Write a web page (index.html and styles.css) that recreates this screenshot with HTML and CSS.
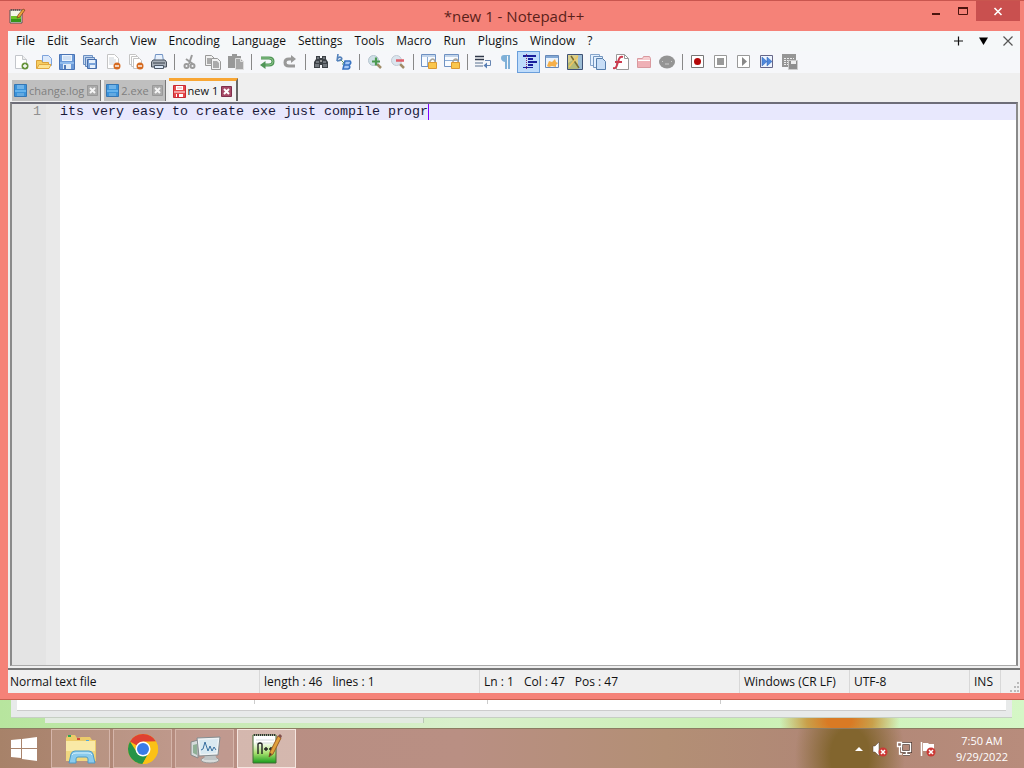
FILE: index.html
```
<!DOCTYPE html>
<html lang="en">
<head>
  <meta charset="UTF-8">
  <meta name="viewport" content="width=device-width, initial-scale=1.0">
  <title>*new 1 - Notepad++</title>
  <link rel="stylesheet" href="styles.css">
</head>
<body>

  <main class="window">
    <header class="titlebar">
      <svg class="app-icon" width="18" height="18" viewBox="0 0 18 18"><path d="M2 3h12v13H2z" fill="#f4f7e8" stroke="#555"/><path d="M3 9h10v6H3z" fill="#6cc427"/><path d="M3 12h10v3H3z" fill="#35961b"/><path d="M3 3h10" stroke="#333" stroke-dasharray="1 1"/><path d="M9 11l1-3 5-6 2 1-5 7z" fill="#e9a43a" stroke="#7a3b1d" stroke-width=".7"/></svg>
      <h1>*new 1 - Notepad++</h1>
      <div class="window-buttons">
        <button aria-label="Minimize"><svg width="12" height="12" viewBox="0 0 12 12"><path d="M2 8h8v2H2z" fill="#4b150f"/></svg></button>
        <button aria-label="Maximize"><svg width="12" height="12" viewBox="0 0 12 12"><path d="M1.5 3.5h9v6h-9z" fill="none" stroke="#4b150f"/><path d="M1 2h10v2H1z" fill="#4b150f"/></svg></button>
        <button class="close" aria-label="Close"><svg width="12" height="12" viewBox="0 0 12 12"><path d="M2.500 3l7 7M9.500 3l-7 7" stroke="#fff" stroke-width="1.600"/></svg></button>
      </div>
    </header>

    <div class="client">
      <nav class="menubar">
        <button>File</button>
        <button>Edit</button>
        <button>Search</button>
        <button>View</button>
        <button>Encoding</button>
        <button>Language</button>
        <button>Settings</button>
        <button>Tools</button>
        <button>Macro</button>
        <button>Run</button>
        <button>Plugins</button>
        <button>Window</button>
        <button>?</button>
        <div class="menu-extra">
          <button aria-label="New tab"><svg width="12" height="12" viewBox="0 0 12 12"><path d="M2 6h9M6.500 1.500v9" stroke="#111" stroke-width="1.200"/></svg></button>
          <button aria-label="Tab list"><svg width="12" height="12" viewBox="0 0 12 12"><path d="M2 2.500h9L6.500 10z" fill="#000"/></svg></button>
          <button aria-label="Close tab"><svg width="12" height="12" viewBox="0 0 12 12"><path d="M1.500 1.500l9 9M10.500 1.500l-9 9" stroke="#555" stroke-width="1.200"/></svg></button>
        </div>
      </nav>

      <div class="toolbar">
        <button aria-label="New"><svg viewBox="0 0 16 16"><path d="M2.500 1.500h7l4 4v9h-11z" fill="#fff" stroke="#c3c6cb"/><path d="M9.500 1.500v4h4" fill="#eee" stroke="#c3c6cb"/><circle cx="12" cy="12" r="3.500" fill="#66933a"/><path d="M10 12h4M12 10v4" stroke="#fff" stroke-width="1.300"/></svg></button>
        <button aria-label="Open"><svg viewBox="0 0 16 16"><path d="M6.500 1.500h6l3 3v7h-9z" fill="#dce9fb" stroke="#7ea3dc"/><path d="M.5 6.500h5l1 2h6v6H.5z" fill="#f7ce62" stroke="#d9a13c"/><path d="M1 14.500l2-4h12l-2 4z" fill="#fde391" stroke="#e1a941"/></svg></button>
        <button aria-label="Save"><svg viewBox="0 0 16 16"><path d="M.5.5h15v15H.5z" fill="#6c9ad8" stroke="#4a74b5"/><path d="M3 1h10v6H3z" fill="#eaf3fd"/><path d="M4 3h8M4 5h8" stroke="#b5cdea"/><path d="M1 8h14v2H1z" fill="#92bcec"/><path d="M4 10h8v5H4z" fill="#e4edf7"/><path d="M5 11h2v4H5z" fill="#4f78b6"/></svg></button>
        <button aria-label="Save all"><svg viewBox="0 0 16 16"><path d="M1.500 1.500h9v9h-9z" fill="#c1d5ef" stroke="#6c90c2"/><path d="M3.500 3.500h9v9h-9z" fill="#c1d5ef" stroke="#5f86bd"/><path d="M5.500 5.500h9v9h-9z" fill="#7ba4da" stroke="#466ca9"/><path d="M7 6h6v3H7zM8 11h5v3H8z" fill="#e6f0fb"/></svg></button>
        <button aria-label="Close file"><svg viewBox="0 0 16 16"><path d="M2.500.5h7l4 4v10h-11z" fill="#fff" stroke="#c4c4c4"/><path d="M4 4h5M4 6h7M4 8h7M4 10h5" stroke="#ccd2d8"/><circle cx="12" cy="12" r="3.500" fill="#d56b22"/><path d="M10 12h4" stroke="#fff" stroke-width="1.400"/></svg></button>
        <button aria-label="Close all"><svg viewBox="0 0 16 16"><path d="M1.500.5h6l2 2v8h-8z" fill="#fff" stroke="#c4c4c4"/><path d="M3.500 2.500h6l2 2v8h-8z" fill="#fff" stroke="#c4c4c4"/><path d="M5.500 4.500h6l2 2v8h-8z" fill="#fff" stroke="#c4c4c4"/><circle cx="12" cy="12" r="3.500" fill="#d56b22"/><path d="M10 12h4" stroke="#fff" stroke-width="1.400"/></svg></button>
        <button aria-label="Print"><svg viewBox="0 0 16 16"><path d="M4.500.5h7l1 7h-9z" fill="#e8f1fd" stroke="#7294c4"/><path d="M2 6l-1.500 2v5h15V8L14 6z" fill="#a7afb8" stroke="#4b535e"/><path d="M2 9h12" stroke="#38404b"/><path d="M3.500 11.500h9v3h-9z" fill="#dce9f8" stroke="#4d5866"/></svg></button>
        <span class="separator"></span>
        <button aria-label="Cut"><svg viewBox="0 0 16 16"><path d="M10 1L7 10M4 5l7 5" stroke="#9b9b9b" stroke-width="2" fill="none"/><circle cx="4.500" cy="12" r="2" fill="none" stroke="#9b9b9b" stroke-width="2"/><circle cx="10.500" cy="12" r="2" fill="none" stroke="#9b9b9b" stroke-width="2"/></svg></button>
        <button aria-label="Copy"><svg viewBox="0 0 16 16"><path d="M.5 1.500h6l3 3v7h-9z" fill="#f1f1f1" stroke="#999"/><path d="M2 4h4v6H2z" fill="#aaa"/><path d="M6.500 4.500h6l3 3v8h-9z" fill="#f1f1f1" stroke="#999"/><path d="M8 7h4l2 2v5H8z" fill="#aaa"/></svg></button>
        <button aria-label="Paste"><svg viewBox="0 0 16 16"><path d="M0 2h4V0h5v2h4v12H0z" fill="#989898"/><path d="M7.500 4.500h5l3 3v8h-8z" fill="#a6a6a6" stroke="#ddd"/><path d="M12.500 4.500v3h3" stroke="#ddd" fill="none"/></svg></button>
        <span class="separator"></span>
        <button aria-label="Undo"><svg viewBox="0 0 16 16"><path d="M2 4h8q4 0 4 3.500T10 11H6" fill="none" stroke="#4f9557" stroke-width="3"/><path d="M2 4h8q4 0 4 3.500T10 11H6" fill="none" stroke="#8cc48a"/><path d="M6.500 7v8L1 11z" fill="#4f9557"/></svg></button>
        <button aria-label="Redo"><svg viewBox="0 0 16 16"><path d="M10 5H7Q3 5 3 8.500T7 12h6" fill="none" stroke="#999" stroke-width="3"/><path d="M9 1v8l5-4z" fill="#999"/></svg></button>
        <span class="separator"></span>
        <button aria-label="Find"><svg viewBox="0 0 16 16"><path d="M3 2h4v2h2V2h4v3l2 3v6H9v-3H7v3H1V8l2-3z" fill="#3c4146"/><path d="M3 8h3M10 8h3M3 10v3M5 10v3M11 10v3M13 10v3M4 4h2M10 4h2" stroke="#a6adb3"/><path d="M7 6h2v2H7z" fill="#999"/></svg></button>
        <button aria-label="Replace"><svg viewBox="0 0 16 16"><path d="M2 0L1 7M1.500 4.500Q4 2 5.500 4T1 7" fill="none" stroke="#5482bb" stroke-width="1.600"/><path d="M5 6l4 4M9 7v3H6" fill="none" stroke="#5d9a67"/><path d="M9 7h5q2 2-1 4 2 3-1 4H7zM8 11h5" fill="#a7c9f7" stroke="#3974c2" stroke-width="1.600"/></svg></button>
        <span class="separator"></span>
        <button aria-label="Zoom in"><svg viewBox="0 0 16 16"><path d="M9 9l5 5" stroke="#a08c68" stroke-width="2.500"/><circle cx="6.500" cy="6.500" r="5" fill="#cfe0e6" stroke="#b5c4cf"/><path d="M5 7.500h8M9 3.500v8" stroke="#4b9a50" stroke-width="2.200"/></svg></button>
        <button aria-label="Zoom out"><svg viewBox="0 0 16 16"><path d="M9 9l5 5" stroke="#a08c68" stroke-width="2.500"/><circle cx="6.500" cy="6.500" r="5" fill="#dbe5ee" stroke="#c2cad4"/><path d="M6 6.500h8" stroke="#df5f6a" stroke-width="2.500"/></svg></button>
        <span class="separator"></span>
        <button aria-label="Synchronize vertical scrolling"><svg viewBox="0 0 16 16"><path d="M.5.5h14v12H.5z" fill="#f8fbff" stroke="#6e91c2"/><path d="M1 2h13M6.500 3v9" stroke="#8cadd5"/><path d="M9 9V7q3-4 5 0v2" fill="none" stroke="#a6a29a" stroke-width="1.500"/><path d="M7.500 8.500h8v6h-8z" fill="#fac64c" stroke="#dc9931"/></svg></button>
        <button aria-label="Synchronize horizontal scrolling"><svg viewBox="0 0 16 16"><path d="M.5.5h14v12H.5z" fill="#f8fbff" stroke="#6e91c2"/><path d="M1 2h13M1 6.500h13" stroke="#8cadd5"/><path d="M9 9V7q3-4 5 0v2" fill="none" stroke="#a6a29a" stroke-width="1.500"/><path d="M7.500 8.500h8v6h-8z" fill="#fac64c" stroke="#dc9931"/></svg></button>
        <span class="separator"></span>
        <button aria-label="Word wrap"><svg viewBox="0 0 16 16"><path d="M0 2.500h9M0 5.500h9" stroke="#30384a" stroke-width="1.300"/><path d="M0 9h8M0 12h8" stroke="#8d9db3" stroke-width="1.300"/><path d="M10 6.500h5.500v5H11" stroke="#6886b3" fill="none"/><path d="M12 8.500v6l-3.500-3z" fill="#587eb5"/></svg></button>
        <button aria-label="Show all characters"><svg viewBox="0 0 16 16"><path d="M12 1H6Q3 1 3 4t4 4v7h2V2h1v13h2z" fill="#7fb0d8"/></svg></button>
        <button class="pressed" aria-label="Indent guide"><svg viewBox="0 0 16 16"><path d="M2 1h13v2H2zM7 4h5v2H7zM7 7h9v2H7zM7 10h5v2H7zM2 13h10v1H2z" fill="#1a1f9c"/><path d="M5.500 0v16" stroke="#8a2a70" stroke-dasharray="1 1"/></svg></button>
        <button aria-label="User defined language"><svg viewBox="0 0 16 16"><path d="M1.500 1.500h13v12h-13z" fill="#eaf3fd" stroke="#6789b8"/><path d="M2 3h12" stroke="#83a8d5" stroke-width="2"/><path d="M3 12l2-5 3 1 3-3 1 3 2 1-2 2v2l-4-1-3 1z" fill="#f6b04b"/></svg></button>
        <button aria-label="Document map"><svg viewBox="0 0 16 16"><path d="M.5.5h15v15H.5z" fill="#d9cf8d" stroke="#3f5277"/><path d="M1 9l5-3 5 4v5H1z" fill="#b3ba78"/><path d="M11 1h4v14h-4z" fill="#9dbdd6"/><path d="M4 2l8 12" stroke="#7a6c2e" stroke-width="1.500"/><path d="M2 13L11 2" stroke="#efc65e" stroke-width="1.500"/></svg></button>
        <button aria-label="Document list"><svg viewBox="0 0 16 16"><path d="M.5.5h9v11h-9z" fill="#e3f0ff" stroke="#86a5cb"/><path d="M3.500 2.500h9v11h-9z" fill="#e3f0ff" stroke="#7496bf"/><path d="M6.500 4.500h6l3 3v8h-9z" fill="#c7ddf6" stroke="#567eac"/></svg></button>
        <button aria-label="Function list"><svg viewBox="0 0 16 16"><path d="M3.500.5h8l4 4v11h-12z" fill="#fff" stroke="#999"/><path d="M11.500.5v4h4" fill="none" stroke="#999"/><path d="M0 14q3 1 4-3l2-6q1-3 4-2M2 8h7" fill="none" stroke="#cc3b4f" stroke-width="2"/></svg></button>
        <button aria-label="Folder as workspace"><svg viewBox="0 0 16 16"><path d="M1.500 13.500v-9h5l1-2h6l1 2v9z" fill="#f6cdd0" stroke="#d9999f"/><path d="M2 7h12v6H2z" fill="#efb0b6"/><path d="M2 6.500h12" stroke="#fff"/></svg></button>
        <button aria-label="Monitoring"><svg viewBox="0 0 16 16"><ellipse cx="8" cy="8" rx="8" ry="6.500" fill="#949494"/><path d="M3 7l1 1M12 7l1 1M6 10h4" stroke="#cacaca"/></svg></button>
        <span class="separator"></span>
        <button aria-label="Record macro"><svg viewBox="0 0 16 16"><path d="M1.500 1.500h12v12h-12z" fill="#fff" stroke="#777"/><circle cx="7.500" cy="7.500" r="3.500" fill="#b40808"/></svg></button>
        <button aria-label="Stop recording"><svg viewBox="0 0 16 16"><path d="M1.500 1.500h12v12h-12z" fill="#fff" stroke="#999"/><path d="M4 4h7v7H4z" fill="#999"/></svg></button>
        <button aria-label="Play macro"><svg viewBox="0 0 16 16"><path d="M1.500 1.500h12v12h-12z" fill="#fff" stroke="#999"/><path d="M6 3l5 4.500L6 12z" fill="#888"/></svg></button>
        <button aria-label="Run macro multiple times"><svg viewBox="0 0 16 16"><path d="M1.500 1.500h12v12h-12z" fill="#eef5ff" stroke="#668"/><path d="M3 3l5 4.500L3 12zM8 3l5 4.500L8 12z" fill="#4f88dc" stroke="#2e62b3" stroke-width=".5"/></svg></button>
        <button aria-label="Save macro"><svg viewBox="0 0 16 16"><path d="M0 0h14v13H0z" fill="#969696"/><path d="M2 4.500h10M2 6.500h5M2 8.500h4M2 10.500h4" stroke="#eee" stroke-dasharray="2 1"/><path d="M6.500 6.500h9v9h-9z" fill="#8e8e8e" stroke="#ccc"/><path d="M9 7h5v3H9z" fill="#eee"/></svg></button>
      </div>

      <div class="tabs">
        <div class="tab">
          <svg class="disk" viewBox="0 0 13 13"><path d="M.5.5h12v12H.5z" fill="#3b93da" stroke="#3476b4"/><path d="M3 1h7v4H3z" fill="#6fb3e8"/><path d="M1 6h11v2H1z" fill="#65b3ed"/><path d="M3 9h7v3H3z" fill="#63a9e0"/></svg>
          <button class="tab-name">change.log</button>
          <button class="tab-close" aria-label="Close change.log"><svg viewBox="0 0 11 11"><path d="M.5.5h10v10H.5z" fill="#aaa" stroke="#999"/><path d="M3 3l5 5M8 3L3 8" stroke="#f5f5f5" stroke-width="2"/></svg></button>
        </div>
        <div class="tab">
          <svg class="disk" viewBox="0 0 13 13"><path d="M.5.5h12v12H.5z" fill="#3b93da" stroke="#3476b4"/><path d="M3 1h7v4H3z" fill="#6fb3e8"/><path d="M1 6h11v2H1z" fill="#65b3ed"/><path d="M3 9h7v3H3z" fill="#63a9e0"/></svg>
          <button class="tab-name">2.exe</button>
          <button class="tab-close" aria-label="Close 2.exe"><svg viewBox="0 0 11 11"><path d="M.5.5h10v10H.5z" fill="#aaa" stroke="#999"/><path d="M3 3l5 5M8 3L3 8" stroke="#f5f5f5" stroke-width="2"/></svg></button>
        </div>
        <div class="tab active">
          <svg class="disk" viewBox="0 0 13 13"><path d="M.5.5h12v12H.5z" fill="#e64848" stroke="#c62b35"/><path d="M3 1h7v4H3z" fill="#fff"/><path d="M4 3h5" stroke="#e9a1a1"/><path d="M1 6h11v2H1z" fill="#f3a0a0"/><path d="M3 9h7v3H3z" fill="#fff"/><path d="M4 9h2v3H4z" fill="#d34"/></svg>
          <button class="tab-name">new 1</button>
          <button class="tab-close" aria-label="Close new 1"><svg viewBox="0 0 11 11"><path d="M.5.5h10v10H.5z" fill="#a84a67" stroke="#80304d"/><path d="M3 3l5 5M8 3L3 8" stroke="#fff" stroke-width="2"/></svg></button>
        </div>
      </div>

      <div class="editor">
        <div class="line-numbers">1</div>
        <div class="fold-margin"></div>
        <div class="code">
          <textarea aria-label="new 1" spellcheck="false">its very easy to create exe just compile progr</textarea>
          <span class="caret"></span>
        </div>
      </div>

      <footer class="statusbar">
        <span>Normal text file</span>
        <span class="pair"><span>length : 46</span><span>lines : 1</span></span>
        <span class="pair"><span>Ln : 1</span><span>Col : 47</span><span>Pos : 47</span></span>
        <span>Windows (CR LF)</span>
        <span>UTF-8</span>
        <span>INS</span>
        <span class="grip"><svg width="12" height="12" viewBox="0 0 12 12"><path d="M9 1h2v2H9zM6 5h2v2H6zM9 5h2v2H9zM2 9h2v2H2zM6 9h2v2H6zM9 9h2v2H9z" fill="#bbb"/></svg></span>
      </footer>
    </div>
  </main>

  <!-- lower edges of the windows behind -->
  <div class="desktop">
    <div class="back-window">
      <div class="back-columns"><i></i><i></i><i></i></div>
    </div>
    <div class="back-window-small"></div>
  </div>

  <footer class="taskbar">
    <button class="start" aria-label="Start"><svg width="28" height="26" viewBox="0 0 28 26"><path d="M1 4l10-1v9H1zM12 3l15-2v11H12zM1 13h10v9L1 21zM12 13h15v12l-15-2z" fill="#fff"/></svg></button>
    <button class="task" aria-label="File Explorer"><svg width="34" height="32" viewBox="0 0 34 32"><path d="M2 5l2-3h7l2 3 4-1h9l2 3h4v21H2z" fill="#eccb6a"/><path d="M4 2h3v2H4z" fill="#2da653"/><path d="M13 5h3v2h-3z" fill="#d74b38"/><path d="M22 7h3v2h-3z" fill="#4eaadb"/><path d="M2 8h29v20H2z" fill="#f9e9a6"/><path d="M2 18h29v10H2z" fill="#f0d780"/><path d="M5 30l2-9q1-3 4-3h14q3 0 4 3l2 9h-7v-4q0-2-2-2h-8q-2 0-2 2v4z" fill="#8bcbed" stroke="#4d9bc6"/><path d="M8 22q1-2 4-2h12q3 0 4 2" stroke="#d5f1fc" fill="none"/></svg></button>
    <button class="task" aria-label="Google Chrome"><svg width="32" height="32" viewBox="0 0 32 32"><circle cx="16" cy="16" r="15" fill="#fbc116"/><path d="M16 16L3 8.500A15 15 0 0 1 29 8.500H16z" fill="#df4132"/><path d="M3 8.500A15 15 0 0 0 15.500 31L22 19.500 16 16l-6 3.500z" fill="#269449"/><path d="M29 8.500A15 15 0 0 1 15.500 31L22 19.500V9z" fill="#fbc116"/><circle cx="16" cy="16" r="7.500" fill="#fff"/><circle cx="16" cy="16" r="6" fill="#3a7ce8"/></svg></button>
    <button class="task" aria-label="Task Manager"><svg width="34" height="32" viewBox="0 0 34 32"><path d="M3 9l7-2v18l-7-3z" fill="#d5dbdb" stroke="#888"/><path d="M5 12l4-1v11l-4-2z" fill="#8fb096"/><ellipse cx="22" cy="27" rx="9" ry="3" fill="#d8dbda" stroke="#999"/><path d="M17 21h10l2 6H16z" fill="#bfc5c6"/><path d="M9 5l23-1-2 18-19 1z" fill="#eff3f4" stroke="#848d91"/><path d="M11 7l19-1-2 14-15 1z" fill="#d9e9f1"/><path d="M13 17l2-1 2-7 3 9 2-5 2 5 2-4 2 3" stroke="#386f9f" fill="none"/></svg></button>
    <button class="task active" aria-label="Notepad++"><svg width="34" height="34" viewBox="0 0 34 34"><defs><linearGradient id="npp" x1="0" y1="0" x2="0" y2="1"><stop offset=".25" stop-color="#fff"/><stop offset=".65" stop-color="#a7df6d"/><stop offset="1" stop-color="#179c1c"/></linearGradient></defs><path d="M3 3h23v28H3z" fill="url(#npp)" stroke="#426b35"/><path d="M4 3h22" stroke="#333" stroke-width="2" stroke-dasharray="1 1"/><path d="M6 8h18M6 11h18" stroke="#d5dcdc"/><path d="M8 22V12q2-2 4 0v10M14 17h4M16 15v4M19 17h4M21 15v4" stroke="#222" stroke-width="1.400" fill="none"/><path d="M19 25l1-5L28 4l3 2-8 16z" fill="#e1a23c" stroke="#9b5c25"/><path d="M28 4l2-2 2 2-1 2z" fill="#80504d"/><path d="M19 25l1-4 2 1z" fill="#4b3e29"/></svg></button>

    <div class="tray">
      <button aria-label="Show hidden icons"><svg width="10" height="16" viewBox="0 0 10 16"><path d="M1 10l4-4 4 4z" fill="#fff"/></svg></button>
      <button aria-label="Volume"><svg width="16" height="18" viewBox="0 0 16 18"><path d="M1 6h2l4-4v14l-4-4H1z" fill="#fff" stroke="#574038" stroke-width=".5"/><circle cx="11" cy="12" r="4.500" fill="#cc3935"/><path d="M9 10l4 4M13 10l-4 4" stroke="#fff" stroke-width="1.500"/></svg></button>
      <button aria-label="Network"><svg width="16" height="18" viewBox="0 0 16 18"><path d="M5.500 3.500h9v8h-9zM7 14.500h7M10.500 12v2" stroke="#4c342c" stroke-width="3" fill="none"/><path d="M5.500 3.500h9v8h-9zM7 14.500h7M10.500 12v2" stroke="#fff" stroke-width="1.500" fill="none"/><path d="M1.500 2.500h4v4h-4zM3.500 7v7H6" fill="#8b6b60" stroke="#fff" stroke-width="1.300"/></svg></button>
      <button aria-label="Action Center"><svg width="16" height="18" viewBox="0 0 16 18"><path d="M1.500 2v14" stroke="#fff" stroke-width="1.500"/><path d="M3 3h5l1 1h5v7H3z" fill="#fff"/><circle cx="11" cy="12" r="4.500" fill="#cc3935"/><path d="M9 10l4 4M13 10l-4 4" stroke="#fff" stroke-width="1.500"/></svg></button>
      <time class="clock" datetime="2022-09-29T07:50"><span>7:50 AM</span><span>9/29/2022</span></time>
    </div>
  </footer>

</body>
</html>
```
FILE: styles.css
```
* {
  box-sizing: border-box;
}
body {
  margin: 0;
  height: 100vh;
  display: flex;
  flex-direction: column;
  overflow: hidden;
  font-family: "Open Sans", "Noto Sans", sans-serif;
  font-size: 12px;
  line-height: 16px;
  color: #111;
  background: #c9ecb0;
}
button {
  margin: 0;
  padding: 0;
  border: none;
  background: none;
  font: inherit;
  color: inherit;
  display: flex;
  align-items: center;
  justify-content: center;
}
svg {
  display: block;
  flex: none;
}

/* window frame */
.window {
  flex: 1;
  min-height: 0;
  display: flex;
  flex-direction: column;
  padding: 0 4px 6px 8px;
  background: #f58278;
  border-top: 1px solid #c9564f;
  border-bottom: 1px solid #c7604f;
}
.titlebar {
  height: 30px;
  display: grid;
  grid-template-columns: 1fr auto 1fr;
  align-items: center;
}
.titlebar h1 {
  margin: 0;
  font-size: 15px;
  font-weight: normal;
  color: #5b1f1a;
}
.window-buttons {
  display: flex;
  align-self: start;
  justify-self: end;
}
.window-buttons button {
  width: 27px;
  height: 20px;
}
.window-buttons .close {
  width: 44px;
  background: #c9504f;
}
.client {
  flex: 1;
  min-height: 0;
  display: flex;
  flex-direction: column;
  background: #efefef;
}

/* menu */
.menubar {
  display: flex;
  align-items: center;
  gap: 12px;
  height: 20px;
  padding: 0 6px 0 8px;
  background: #f5f8f9;
}
.menu-extra {
  display: flex;
  gap: 13px;
  margin-left: auto;
}

/* toolbar */
.toolbar {
  display: flex;
  height: 22px;
  padding-left: 1px;
  background: #f6f7fa;
}
.toolbar button {
  width: 23px;
}
.toolbar svg {
  width: 16px;
  height: 16px;
}
.toolbar .pressed {
  background: #bfdcfb;
  border: 1px solid #6a9edb;
}
.separator {
  width: 8px;
  margin: 3px 0;
  background: linear-gradient(#888, #888) center / 1px 100% no-repeat;
}

/* document tabs */
.tabs {
  display: flex;
  align-items: flex-end;
  gap: 3px;
  height: 29px;
  padding: 0 0 1px 4px;
  font-size: 11px;
}
.tab {
  display: flex;
  align-items: center;
  gap: 2px;
  height: 21px;
  padding: 0 2px;
  background: #bfbfbf;
  color: #808080;
  border-right: 1px solid #777;
}
.tab.active {
  height: 23px;
  padding: 0 4px;
  background: #f3f3f3;
  color: #111;
  border-top: 3px solid #f8a634;
  border-right: 2px solid #666;
}
.disk {
  width: 13px;
  height: 13px;
}
.tab-close svg {
  width: 11px;
  height: 11px;
}
.tab-close {
  margin-left: 1px;
}

/* editor */
.editor {
  flex: 1;
  min-height: 0;
  display: flex;
  margin: 0 2px;
  background: #fff;
  border: 2px solid #8a8a8a;
  border-top-color: #6d6d78;
  border-bottom: 1px solid #aaa;
  font-family: "Liberation Mono", "Courier New", monospace;
  font-size: 10pt;
}
.line-numbers {
  width: 34px;
  padding-right: 5px;
  text-align: right;
  color: #909090;
  background: #e4e4e4;
}
.fold-margin {
  width: 14px;
  background: #e9e9e9;
}
.code {
  position: relative;
  flex: 1;
  display: flex;
  background: linear-gradient(#e8e8fd, #e8e8fd) top / 100% 16px no-repeat;
}
.code textarea {
  flex: 1;
  padding: 0;
  border: none;
  outline: none;
  resize: none;
  background: none;
  font: inherit;
  line-height: 16px;
  color: #1a1a3a;
}
.caret {
  position: absolute;
  left: 46ch;
  top: 0;
  width: 1px;
  height: 16px;
  background: #8000ff;
}

/* status bar */
.statusbar {
  display: grid;
  grid-template-columns: 252px 220px 1fr 110px 120px 31px 19px;
  height: 25px;
  margin-top: 2px;
  border-top: 2px solid #777;
  background: #f0f0f0;
}
.statusbar > span {
  display: flex;
  align-items: center;
  padding-left: 4px;
  white-space: nowrap;
  border-right: 1px solid #d8d8d8;
}
.statusbar > span:first-child {
  padding-left: 2px;
}
.statusbar .pair {
  gap: 10px;
}
.statusbar .grip {
  align-items: flex-end;
  justify-content: flex-end;
  border-right: none;
}

/* desktop behind the window */
.desktop {
  height: 28px;
  background: radial-gradient(ellipse 60px 40px at 82% 75%, #d97a24 20%, #c9a04a 55%, transparent), linear-gradient(to right, #b7e59e, #d9f0cc 45%, #caf0b4 70%, #d5f7c6);
}
.back-window {
  height: 18px;
  margin: 0 12px 0 11px;
  padding: 0 6px;
  background: #e8eaea;
  border-bottom: 1px solid #c6cfc3;
}
.back-columns {
  display: grid;
  grid-template-columns: 238px 233px 233px;
  height: 11px;
  background: #fff;
  border-bottom: 1px solid #ccc;
}
.back-columns i {
  height: 4px;
  border-right: 1px solid #ccc;
}
.back-window-small {
  width: 37%;
  height: 5px;
  margin-left: 45px;
  background: #e3ebe1;
  border-right: 1px solid #b9c8b4;
}

/* taskbar */
.taskbar {
  display: flex;
  gap: 3px;
  height: 40px;
  border-top: 1px solid #8d7c62;
  background: radial-gradient(ellipse 55px 80px at 83% 70%, #82652e 35%, transparent), linear-gradient(to right, #a78269, #b88e83 20%, #b98f83 45%, #b38f75 65%, #b08776 80%, #b88c7c);
}
.start {
  width: 48px;
}
.task {
  width: 59px;
  border: 1px solid #d5b5aa;
  background: rgba(255, 235, 230, 0.12);
}
.task.active {
  border-color: #f5e5df;
  background: rgba(255, 245, 240, 0.4);
}
.tray {
  display: flex;
  align-items: center;
  gap: 8px;
  margin-left: auto;
  padding-right: 16px;
  color: #fff;
}
.clock {
  display: flex;
  flex-direction: column;
  align-items: center;
  margin-left: 12px;
  font-size: 11px;
}
```
